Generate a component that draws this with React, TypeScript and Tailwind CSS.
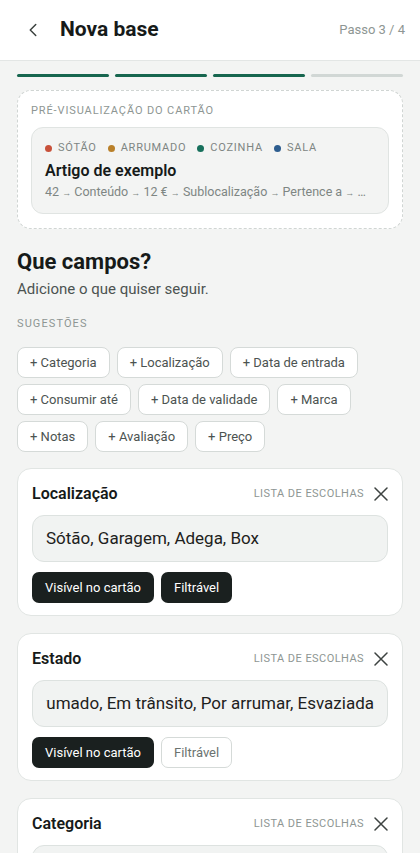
import { ChevronLeft } from "lucide-react";

const tags = [
  { label: "Sótão", dot: "bg-[#c8513a]" },
  { label: "Arrumado", dot: "bg-[#b9802a]" },
  { label: "Cozinha", dot: "bg-[#17705c]" },
  { label: "Sala", dot: "bg-[#2d5d8f]" },
];

const suggestions = [
  ["Categoria", "Localização", "Data de entrada"],
  ["Consumir até", "Data de validade", "Marca"],
  ["Notas", "Avaliação", "Preço"],
];

const meta = ["42", "Conteúdo", "12 €", "Sublocalização", "Pertence a", "…"];

const CloseIcon = () => (
  <svg width="14" height="14" viewBox="0 0 14 14" className="text-[#3d4341]">
    <path d="M1 1 L13 13 M13 1 L1 13" stroke="currentColor" strokeWidth="1.5" strokeLinecap="round" />
  </svg>
);

interface FieldCardProps {
  title: string;
  value: string;
  filterable: boolean;
  scrolled?: boolean;
}

const FieldCard = ({ title, value, filterable, scrolled }: FieldCardProps) => (
  <div className="rounded-[14px] border border-[#e1e5e3] bg-white px-[14px] pt-[14px] pb-[12px]">
    <div className="flex h-[22px] items-center justify-between">
      <h3 className="text-[16px] leading-[22px] font-semibold text-[#161a19]">{title}</h3>
      <div className="flex items-center gap-[10px]">
        <span className="text-[11px] tracking-[0.04em] text-[#8e9693]">LISTA DE ESCOLHAS</span>
        <CloseIcon />
      </div>
    </div>
    <div className="mt-[10px] flex h-[47px] items-center rounded-[12px] border border-[#dde2e0] bg-[#f1f3f2] px-[13px]">
      <div className={`flex w-full overflow-hidden ${scrolled ? "justify-end" : "justify-start"}`}>
        <span className="whitespace-nowrap text-[17px] text-[#1d2120]">{value}</span>
      </div>
    </div>
    <div className="mt-[10px] flex gap-[7px]">
      <span className="flex h-[31px] items-center rounded-[7px] bg-[#1a201f] px-[13px] text-[13px] text-white">
        Visível no cartão
      </span>
      {filterable ? (
        <span className="flex h-[31px] items-center rounded-[7px] bg-[#1a201f] px-[13px] text-[13px] text-white">
          Filtrável
        </span>
      ) : (
        <span className="flex h-[31px] items-center rounded-[7px] border border-[#d5dad8] bg-white px-[12px] text-[13px] text-[#6b7370]">
          Filtrável
        </span>
      )}
    </div>
  </div>
);

export default function App() {
  return (
    <div className="min-h-screen bg-[#f3f4f3] font-['Roboto',sans-serif] text-[#161a19]">
      {/* Header */}
      <header className="flex h-[61px] items-center justify-between border-b border-[#e3e6e5] bg-white pl-[22px] pr-[15px]">
        <div className="flex items-center">
          <ChevronLeft className="h-[22px] w-[22px] text-[#3a403e]" strokeWidth={1.6} />
          <h1 className="ml-[16px] text-[21px] font-bold text-[#161a19]">Nova base</h1>
        </div>
        <span className="text-[13px] text-[#8e9693]">Passo 3 / 4</span>
      </header>

      <main className="px-[17px] pt-[13px] pb-6">
        {/* Progress */}
        <div className="grid grid-cols-4 gap-[6px]">
          <div className="h-[3px] rounded-full bg-[#17664f]" />
          <div className="h-[3px] rounded-full bg-[#17664f]" />
          <div className="h-[3px] rounded-full bg-[#17664f]" />
          <div className="h-[3px] rounded-full bg-[#d1d7d5]" />
        </div>

        {/* Card preview */}
        <section className="mt-[13px] rounded-[14px] border border-dashed border-[#d0d5d3] bg-white px-[13px] pt-[13px] pb-[14px]">
          <p className="text-[11px] leading-[14px] tracking-[0.08em] text-[#8e9693]">PRÉ-VISUALIZAÇÃO DO CARTÃO</p>
          <div className="mt-[9px] rounded-[12px] border border-[#e0e4e2] bg-[#f3f4f3] px-[13px] pt-[13px] pb-[11px]">
            <div className="flex h-[14px] items-center gap-[11px]">
              {tags.map((t) => (
                <span
                  key={t.label}
                  className="flex items-center gap-[6px] text-[11px] leading-[14px] uppercase tracking-[0.07em] text-[#7e8683]"
                >
                  <span className={`h-[7px] w-[7px] rounded-full ${t.dot}`} />
                  {t.label}
                </span>
              ))}
            </div>
            <p className="mt-[5px] text-[16px] leading-[22px] font-semibold text-[#161a19]">Artigo de exemplo</p>
            <p className="mt-[1px] whitespace-nowrap text-[12.5px] leading-[18px] text-[#7e8683]">
              {meta.map((m, i) => (
                <span key={i}>
                  {i > 0 && (
                    <>
                      {" "}
                      <span className="text-[9px]">→</span>{" "}
                    </>
                  )}
                  {m}
                </span>
              ))}
            </p>
          </div>
        </section>

        {/* Fields */}
        <h2 className="mt-[19px] text-[22px] leading-[28px] font-bold text-[#161a19]">Que campos?</h2>
        <p className="mt-[3px] text-[15px] leading-[20px] text-[#4c5351]">Adicione o que quiser seguir.</p>
        <p className="mt-[18px] text-[11px] leading-[14px] tracking-[0.1em] text-[#8e9693]">SUGESTÕES</p>

        <div className="mt-[16px] flex flex-col gap-[6px]">
          {suggestions.map((row, r) => (
            <div key={r} className="flex gap-[7px]">
              {row.map((s) => (
                <span
                  key={s}
                  className="flex h-[31px] items-center rounded-[8px] border border-[#d5dad8] bg-white px-[12px] text-[13px] text-[#4c5351]"
                >
                  + {s}
                </span>
              ))}
            </div>
          ))}
        </div>

        <div className="mt-[16px] flex flex-col gap-[17px]">
          <FieldCard title="Localização" value="Sótão, Garagem, Adega, Box" filterable />
          <FieldCard
            title="Estado"
            value="Novo, Arrumado, Em trânsito, Por arrumar, Esvaziada"
            filterable={false}
            scrolled
          />
          <FieldCard title="Categoria" value="Cozinha, Sala, Quarto, Escritório" filterable={false} />
        </div>
      </main>
    </div>
  );
}
